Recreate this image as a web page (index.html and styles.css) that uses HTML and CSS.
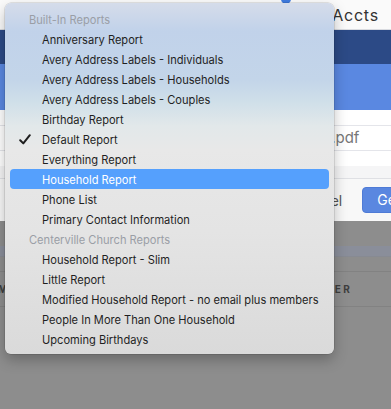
FILE: index.html
```html
<!DOCTYPE html>
<html lang="en">
<head>
    <meta charset="UTF-8">
    <title>Report Picker</title>
    <link rel="stylesheet" href="styles.css">
</head>
<body>
    <div class="app">
        <div class="topbar">
            <span class="dot"></span>
            <span class="topbar-title">Trust Accts</span>
        </div>
        <div class="nav"><span class="nav-label">Reports</span></div>
        <div class="banner"></div>

        <div class="sheet">
            <div class="sheet-row sheet-spacer"></div>
            <div class="sheet-row sheet-field">Report.pdf</div>
            <div class="sheet-row sheet-blank"></div>
            <div class="sheet-row sheet-muted"></div>
            <div class="sheet-footer">
                <span class="btn-cancel">Cancel</span>
                <span class="btn-primary">Generate</span>
            </div>
        </div>

        <div class="backdrop">
            <div class="backdrop-band"></div>
            <div class="table-head">
                <span class="col-name">NAME</span>
                <span class="col-user">USER</span>
            </div>
        </div>

        <!-- popup menu over the dialog -->
        <div class="menu">
            <div class="menu-header">Built-In Reports</div>
            <div class="menu-item">Anniversary Report</div>
            <div class="menu-item">Avery Address Labels - Individuals</div>
            <div class="menu-item">Avery Address Labels - Households</div>
            <div class="menu-item">Avery Address Labels - Couples</div>
            <div class="menu-item">Birthday Report</div>
            <div class="menu-item checked">
                <svg class="check" width="12" height="11" viewBox="0 0 12 11">
                    <path d="M1.2 6.2 L4.3 9.4 L10.8 1.2" fill="none" stroke="#1e1e1e" stroke-width="2" stroke-linecap="round" stroke-linejoin="round"/>
                </svg>
                Default Report
            </div>
            <div class="menu-item">Everything Report</div>
            <div class="menu-item active">Household Report</div>
            <div class="menu-item">Phone List</div>
            <div class="menu-item">Primary Contact Information</div>
            <div class="menu-header">Centerville Church Reports</div>
            <div class="menu-item">Household Report - Slim</div>
            <div class="menu-item">Little Report</div>
            <div class="menu-item">Modified Household Report - no email plus members</div>
            <div class="menu-item">People In More Than One Household</div>
            <div class="menu-item">Upcoming Birthdays</div>
        </div>
    </div>
</body>
</html>
```

FILE: styles.css
```css
body {
    margin: 0;
    font-family: 'Inter', 'Liberation Sans', sans-serif;
    background: #8d8d8d;
}
.app {
    position: relative;
    width: 391px;
    height: 409px;
    overflow: hidden;
    background: #8d8d8d;
}

/* background app */
.topbar {
    height: 29px;
    background: #fafafa;
    border-bottom: 1px solid #d9dbe0;
    display: flex;
    align-items: center;
    justify-content: flex-end;
    padding-right: 12px;
    position: relative;
}
.topbar-title {
    font-size: 16px;
    color: #333;
    letter-spacing: 0.8px;
    word-spacing: -3px;
}
.dot {
    position: absolute;
    left: 281px;
    top: -6px;
    width: 10px;
    height: 10px;
    border-radius: 50%;
    background: #3f7be0;
}
.nav {
    height: 34px;
    background: #2c4a86;
    display: flex;
    align-items: center;
}
.nav-label {
    color: #fff;
    font-size: 13px;
    margin-left: -48px;
}
.banner {
    height: 46px;
    background: #5a88e1;
}
.sheet {
    background: #fff;
}
.sheet-row {
    border-bottom: 1px solid #e4e5ea;
}
.sheet-spacer {
    height: 15px;
}
.sheet-field {
    height: 24px;
    line-height: 24px;
    font-size: 15px;
    color: #777;
    padding-left: 284px;
}
.sheet-blank {
    height: 15px;
    border-bottom: none;
}
.sheet-muted {
    height: 12px;
    background: #f5f5f6;
    border-bottom: 1px solid #dfe0e4;
}
.sheet-footer {
    height: 42px;
    background: #f8f8f8;
    display: flex;
    align-items: center;
    justify-content: flex-end;
    gap: 20px;
    margin-right: -62px;
}
.btn-cancel {
    font-size: 14px;
    color: #555;
}
.btn-primary {
    background: #5a87e0;
    color: #fff;
    font-size: 14px;
    height: 24px;
    line-height: 24px;
    padding: 0 14px;
    border-radius: 4px;
    border: 1px solid #4f7bd6;
}
.backdrop {
    padding-top: 25px;
}
.backdrop-band {
    height: 10px;
    background: #8a8e9a;
    border-bottom: 1px solid #878a92;
    margin-bottom: 14px;
}
.table-head {
    height: 34px;
    border-top: 1px solid #828282;
    border-bottom: 1px solid #828282;
    display: flex;
    align-items: center;
    font-size: 10px;
    font-weight: bold;
    letter-spacing: 2.4px;
    color: #3e3e3e;
}
.col-name {
    margin-left: -22px;
}
.col-user {
    margin-left: 298px;
}

/* popup menu */
.menu {
    position: absolute;
    left: 5px;
    top: 3px;
    width: 329px;
    box-sizing: border-box;
    padding: 6px 5px 5px;
    border-radius: 6px;
    background: linear-gradient(180deg,
        #d5dcea 0%,
        #c1d2ea 8%,
        #c3d5e9 22%,
        #cfdfe9 28%,
        #e2e8ea 35%,
        #e8e8e8 42%,
        #e4e4e4 65%,
        #dadada 100%);
    box-shadow: 0 0 0 0.5px rgba(0, 0, 0, 0.18), 0 6px 14px rgba(0, 0, 0, 0.25);
    font-size: 11.1px;
}
.menu-item, .menu-header {
    height: 19px;
    padding-top: 1px;
    line-height: 20px;
    white-space: nowrap;
    border-radius: 4px;
    position: relative;
}
.menu-header {
    color: #9a9ea6;
    padding-left: 19px;
}
.menu-item {
    color: #1f1f1f;
    padding-left: 32px;
}
.menu-item.active {
    background: #55a0fd;
    color: #fff;
}
.check {
    position: absolute;
    left: 9px;
    top: 5px;
}
```
